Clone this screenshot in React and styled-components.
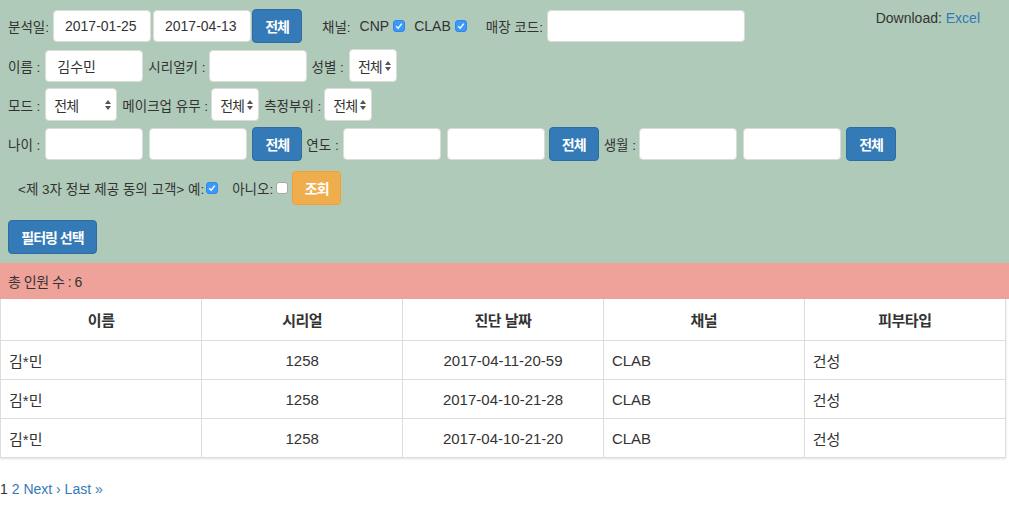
import React from "react";
import styled, { createGlobalStyle } from "styled-components";

const GlobalStyle = createGlobalStyle`
  body {
    margin: 0;
    background: #fff;
    color: #333;
    font-family: "Liberation Sans", "Noto Sans CJK KR", sans-serif;
    font-size: 14px;
  }
`;

const Panel = styled.div`
  background-color: #b0cab9;
  padding: 9px 8px 10px 8px;
`;

const Row = styled.div`
  display: flex;
  align-items: center;
  height: 33px;
  margin-top: ${props => props.$top || 0}px;
  padding-left: ${props => props.$indent || 0}px;
`;

const Label = styled.span`
  font-size: ${props => (props.$latin ? 14 : 13.5)}px;
  margin-right: ${props => (props.$gap !== undefined ? props.$gap : 5)}px;
  white-space: nowrap;
`;

const Input = styled.div`
  box-sizing: border-box;
  width: ${props => props.$w || 98}px;
  height: 32px;
  background: #fff;
  border: 1px solid #d9dcd9;
  border-radius: 4px;
  margin-right: ${props => (props.$gap !== undefined ? props.$gap : 5)}px;
  padding: 0 11px;
  display: flex;
  align-items: center;
  font-size: 14px;
  color: #333;
`;

const SelectBox = styled.div`
  box-sizing: border-box;
  width: ${props => props.$w}px;
  height: 33px;
  background: #fff;
  border: 1px solid #d9dcd9;
  border-radius: 4px;
  margin-right: 5px;
  padding: 0 4px 0 8px;
  display: flex;
  align-items: center;
  justify-content: space-between;
  font-size: 14px;
  letter-spacing: -1px;
`;

const Button = styled.button`
  box-sizing: border-box;
  height: 34px;
  width: ${props => props.$w || 50}px;
  border-radius: 4px;
  border: 1px solid ${props => (props.$warn ? "#eea236" : "#2e6da4")};
  background-color: ${props => (props.$warn ? "#f0ad4e" : "#337ab7")};
  color: #fff;
  font-family: "Liberation Sans", "Noto Sans CJK KR", sans-serif;
  font-weight: bold;
  font-size: 14px;
  letter-spacing: -1px;
  padding: 0;
  margin-right: ${props => (props.$gap !== undefined ? props.$gap : 5)}px;
`;

const Check = styled.span`
  box-sizing: border-box;
  display: inline-flex;
  align-items: center;
  justify-content: center;
  width: 12px;
  height: 12px;
  border-radius: 3px;
  background: ${props => (props.$on ? "#3b99fc" : "#fff")};
  border: 1px solid ${props => (props.$on ? "#2f87e8" : "#a8a8a8")};
  margin-right: ${props => props.$gap || 0}px;
`;

const Download = styled.div`
  margin-left: auto;
  margin-right: 21px;
  align-self: flex-start;
  margin-top: 1px;
  font-size: 14px;
`;

const Link = styled.a`
  color: #337ab7;
  text-decoration: none;
`;

const Total = styled.div`
  background-color: #eea29a;
  height: 36px;
  padding-left: 8px;
  display: flex;
  align-items: center;
  letter-spacing: -0.5px;
`;

const TableWrap = styled.div`
  margin-right: 3px;
  border: 1px solid #ddd;
  border-top: none;
  box-shadow: 0 1px 2px rgba(0, 0, 0, 0.12);
`;

const Table = styled.table`
  width: 100%;
  border-collapse: collapse;
  table-layout: fixed;
  font-size: 15px;
`;

const Th = styled.th`
  height: 41px;
  padding: 0 8px;
  border: 1px solid #ddd;
  border-top: none;
  font-weight: bold;
  text-align: center;
  letter-spacing: -0.5px;
  &:first-child { border-left: none; }
  &:last-child { border-right: none; }
`;

const Td = styled.td`
  height: 38px;
  padding: 0 8px;
  border: 1px solid #ddd;
  text-align: ${props => (props.$center ? "center" : "left")};
  &:first-child { border-left: none; }
  &:last-child { border-right: none; }
`;

const Tr = styled.tr`
  &:last-child td { border-bottom: none; }
`;

const Pager = styled.div`
  margin-top: 23px;
  font-size: 14px;
`;

const Arrows = () => (
  <svg width="8" height="12" viewBox="0 0 8 12">
    <path d="M4 1 L7 5 L1 5 Z" fill="#555" />
    <path d="M4 11 L7 7 L1 7 Z" fill="#555" />
  </svg>
);

const CheckMark = () => (
  <svg width="8" height="8" viewBox="0 0 8 8">
    <path d="M1.2 4.2 L3.2 6.2 L6.8 1.6" stroke="#fff" strokeWidth="1.4" fill="none" />
  </svg>
);

const Select = ({ w }) => (
  <SelectBox $w={w}>
    <span>전체</span>
    <Arrows />
  </SelectBox>
);

const rows = [
  { name: "김*민", serial: "1258", date: "2017-04-11-20-59", channel: "CLAB", skin: "건성" },
  { name: "김*민", serial: "1258", date: "2017-04-10-21-28", channel: "CLAB", skin: "건성" },
  { name: "김*민", serial: "1258", date: "2017-04-10-21-20", channel: "CLAB", skin: "건성" }
];

const App = () => {
  return (
    <>
      <GlobalStyle />
      <Panel>
        <Row>
          <Label $gap={4}>분석일:</Label>
          <Input $gap={2}>2017-01-25</Input>
          <Input $gap={1}>2017-04-13</Input>
          <Button $gap={20}>전체</Button>
          <Label $gap={9}>채널:</Label>
          <Label $latin $gap={4}>CNP</Label>
          <Check $on $gap={9}><CheckMark /></Check>
          <Label $latin $gap={4}>CLAB</Label>
          <Check $on $gap={19}><CheckMark /></Check>
          <Label $gap={4}>매장 코드:</Label>
          <Input $w={198}></Input>
          <Download>
            Download: <Link href="#">Excel</Link>
          </Download>
        </Row>
        <Row $top={7}>
          <Label>이름 :</Label>
          <Input>김수민</Input>
          <Label $gap={3}>시리얼키 :</Label>
          <Input></Input>
          <Label>성별 :</Label>
          <Select w={48} />
        </Row>
        <Row $top={6}>
          <Label>모드 :</Label>
          <Select w={72} />
          <Label $gap={3}>메이크업 유무 :</Label>
          <Select w={48} />
          <Label $gap={3}>측정부위 :</Label>
          <Select w={48} />
        </Row>
        <Row $top={6}>
          <Label>나이 :</Label>
          <Input $gap={6}></Input>
          <Input></Input>
          <Button $gap={4}>전체</Button>
          <Label $gap={4}>연도 :</Label>
          <Input $gap={6}></Input>
          <Input $gap={4}></Input>
          <Button>전체</Button>
          <Label $gap={3}>생월 :</Label>
          <Input $gap={6}></Input>
          <Input></Input>
          <Button>전체</Button>
        </Row>
        <Row $top={11} $indent={10}>
          <Label $gap={2}>&lt;제 3자 정보 제공 동의 고객&gt; 예:</Label>
          <Check $on $gap={14}><CheckMark /></Check>
          <Label $gap={3}>아니오:</Label>
          <Check $gap={4} />
          <Button $warn $w={49}>조회</Button>
        </Row>
        <Row $top={16}>
          <Button $w={89}>필터링 선택</Button>
        </Row>
      </Panel>
      <Total>총 인원 수 : 6</Total>
      <TableWrap>
        <Table>
          <thead>
            <tr>
              <Th>이름</Th>
              <Th>시리얼</Th>
              <Th>진단 날짜</Th>
              <Th>채널</Th>
              <Th>피부타입</Th>
            </tr>
          </thead>
          <tbody>
            {rows.map((r, i) => (
              <Tr key={i}>
                <Td>{r.name}</Td>
                <Td $center>{r.serial}</Td>
                <Td $center>{r.date}</Td>
                <Td>{r.channel}</Td>
                <Td>{r.skin}</Td>
              </Tr>
            ))}
          </tbody>
        </Table>
      </TableWrap>
      <Pager>
        1 <Link href="#">2</Link> <Link href="#">Next ›</Link> <Link href="#">Last »</Link>
      </Pager>
    </>
  );
};

export default App;
